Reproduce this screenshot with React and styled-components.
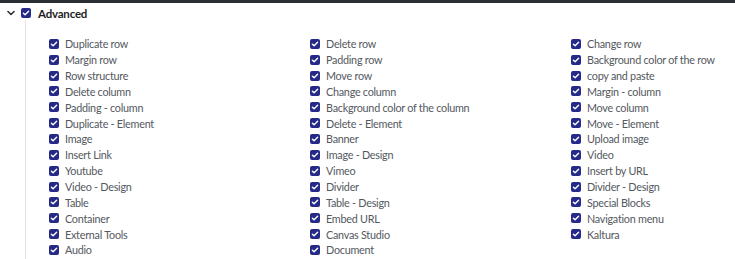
import React from "react";
import styled, { createGlobalStyle } from "styled-components";

const Global = createGlobalStyle`
  html, body { margin: 0; padding: 0; background: #fff; }
  body { font-family: "Lato", "Noto Sans", sans-serif; overflow: hidden; }
`;

const TopBar = styled.div`
  height: 3px;
  background: #2b2e35;
`;

const Section = styled.div`
  padding-left: 7px;
`;

const Header = styled.div`
  display: flex;
  align-items: center;
  height: 14px;
  margin-top: 3px;
`;

const Chevron = styled.svg`
  width: 8px;
  height: 8px;
  margin-right: 6px;
  flex: none;
`;

const Box = styled.span`
  width: 10px;
  height: 10px;
  border-radius: 2px;
  background: #252a89;
  display: inline-flex;
  align-items: center;
  justify-content: center;
  flex: none;
`;

const Title = styled.span`
  font-weight: 700;
  font-size: 11.5px;
  letter-spacing: -0.2px;
  color: #1e1e1e;
  margin-left: 7px;
`;

const Body = styled.div`
  margin-left: 18px;
  border-left: 1px solid #e3e3e3;
  padding-left: 23px;
  padding-top: 16px;
  height: 223px;
  display: grid;
  grid-template-columns: 261px 261px 200px;
  align-content: start;
`;

const Column = styled.div`
  display: flex;
  flex-direction: column;
`;

const Item = styled.label`
  display: flex;
  align-items: center;
  gap: 6px;
  height: 15.85px;
  font-size: 10.8px;
  letter-spacing: -0.25px;
  color: #53585e;
  white-space: nowrap;
`;

const Check = () => (
  <Box>
    <svg width="8" height="8" viewBox="0 0 8 8">
      <path d="M1.4 4.2 L3.1 5.8 L6.6 2.2" fill="none" stroke="#fff" strokeWidth="1.4" strokeLinecap="round" strokeLinejoin="round" />
    </svg>
  </Box>
);

const columns = [
  ["Duplicate row", "Margin row", "Row structure", "Delete column", "Padding - column", "Duplicate - Element", "Image", "Insert Link", "Youtube", "Video - Design", "Table", "Container", "External Tools", "Audio"],
  ["Delete row", "Padding row", "Move row", "Change column", "Background color of the column", "Delete - Element", "Banner", "Image - Design", "Vimeo", "Divider", "Table - Design", "Embed URL", "Canvas Studio", "Document"],
  ["Change row", "Background color of the row", "copy and paste", "Margin - column", "Move column", "Move - Element", "Upload image", "Video", "Insert by URL", "Divider - Design", "Special Blocks", "Navigation menu", "Kaltura"],
];

export default function App() {
  return (
    <>
      <Global />
      <TopBar />
      <Section>
        <Header>
          <Chevron viewBox="0 0 8 8">
            <path d="M1 2.5 L4 5.5 L7 2.5" fill="none" stroke="#333" strokeWidth="1.6" strokeLinecap="round" strokeLinejoin="round" />
          </Chevron>
          <Check />
          <Title>Advanced</Title>
        </Header>
        <Body>
          {columns.map((col, i) => (
            <Column key={i}>
              {col.map((label) => (
                <Item key={label}>
                  <Check />
                  {label}
                </Item>
              ))}
            </Column>
          ))}
        </Body>
      </Section>
    </>
  );
}
